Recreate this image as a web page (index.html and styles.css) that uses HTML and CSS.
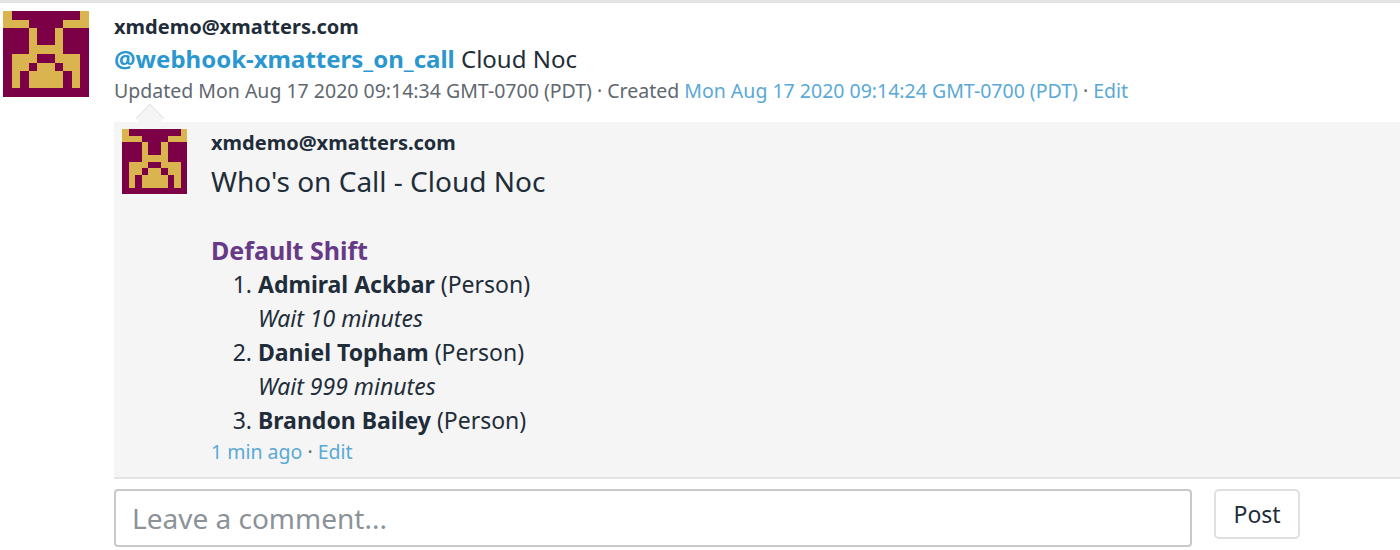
FILE: index.html
```html
<!DOCTYPE html>
<html lang="en">
<head>
<meta charset="utf-8">
<title>Event</title>
<link rel="stylesheet" href="styles.css">
</head>
<body>
<svg class="defs" width="0" height="0" aria-hidden="true">
  <defs>
    <symbol id="identicon" viewBox="0 0 10 10" shape-rendering="crispEdges">
      <rect width="10" height="10" fill="#7b0046"/>
      <path fill="#d9b44f" d="M0 0h1v1h2v1H0zM9 0h1v2H7V1h2zM3 2h1v2h2V2h1v3H3zM1 5h3v1h2V5h3v4H8V7H7V6H6v3H4V6H3v1H2v2H1zM3 7h1v2H3zM6 7h1v2H6z"/>
    </symbol>
  </defs>
</svg>
<main class="event">
  <svg class="avatar avatar-lg"><use href="#identicon"/></svg>
  <div class="event-body">
    <div class="author author-lg">xmdemo@xmatters.com</div>
    <div class="title"><a class="mention" href="#">@webhook-xmatters_on_call</a> Cloud Noc</div>
    <div class="meta">Updated Mon Aug 17 2020 09:14:34 GMT-0700 (PDT) · Created <a href="#">Mon Aug 17 2020 09:14:24 GMT-0700 (PDT)</a> · <a href="#">Edit</a></div>
    <section class="comment">
      <span class="caret"></span>
      <svg class="avatar avatar-sm"><use href="#identicon"/></svg>
      <div class="comment-body">
        <div class="author">xmdemo@xmatters.com</div>
        <p class="comment-title">Who's on Call - Cloud Noc</p>
        <h3 class="shift">Default Shift</h3>
        <ol class="people">
          <li><b>Admiral Ackbar</b> (Person)<br><i>Wait 10 minutes</i></li>
          <li><b>Daniel Topham</b> (Person)<br><i>Wait 999 minutes</i></li>
          <li><b>Brandon Bailey</b> (Person)</li>
        </ol>
        <div class="meta meta-sm"><a href="#">1 min ago</a> · <a href="#">Edit</a></div>
      </div>
    </section>
    <form class="reply">
      <input class="reply-input" type="text" placeholder="Leave a comment...">
      <button class="post" type="button">Post</button>
    </form>
  </div>
</main>
</body>
</html>
```
FILE: styles.css
```css
* { box-sizing: border-box; }
html, body { margin: 0; height: 550px; overflow: hidden; background: #fff; }
body { font-family: "Noto Sans", "Open Sans", sans-serif; color: #1f2d3a; border-top: 3px solid #e4e4e4; }
.defs { position: absolute; }
a { color: #5aa9d6; text-decoration: none; }
.event { display: flex; padding: 8px 0 0 3px; }
.avatar { display: block; flex: none; }
.avatar-lg { width: 86px; height: 86px; }
.avatar-sm { width: 65px; height: 65px; }
.event-body { margin-left: 25px; width: 1186px; }
.author { font-size: 20px; font-weight: 700; line-height: 28px; color: #1f2d3a; }
.author-lg { margin-top: 2px; }
.title { font-size: 24px; line-height: 36px; }
.title .mention { color: #2b97d0; font-weight: 700; }
.meta { font-size: 19.5px; line-height: 28px; color: #5f6870; }
.comment { position: relative; display: flex; margin-top: 17px; padding: 7px 0 0 8px; height: 357px; width: 1286px; background: #f5f5f5; border-bottom: 2px solid #e4e4e4; }
.caret { position: absolute; left: 26px; top: -14px; width: 20px; height: 20px; transform: rotate(45deg) scaleX(1); background: #f5f5f5; border-left: 1px solid #e4e4e4; border-top: 1px solid #e4e4e4; }
.comment .avatar { position: relative; }
.comment-body { margin-left: 24px; }
.comment-title { margin: 0; font-size: 28px; line-height: 48px; }
.shift { margin: 28px 0 0; font-size: 25px; line-height: 34px; font-weight: 700; color: #663a87; }
.people { margin: 0; padding: 0 0 0 47px; font-size: 23px; line-height: 34px; }
.meta-sm { font-size: 19.5px; line-height: 30px; color: #5f6870; }
.reply { display: flex; align-items: flex-start; margin-top: 10px; }
.reply-input { width: 1080px; height: 58px; padding: 0 16px; border: 2px solid #c9c9c9; border-radius: 4px; font: 28px "Noto Sans", sans-serif; color: #1f2d3a; background: #fff; }
.reply-input::placeholder { color: #8b9298; opacity: 1; }
.post { margin-left: 22px; width: 86px; height: 50px; background: #fff; border: 2px solid #e0e0e0; border-radius: 5px; font: 23px "Noto Sans", sans-serif; color: #1f2d3a; }
```
